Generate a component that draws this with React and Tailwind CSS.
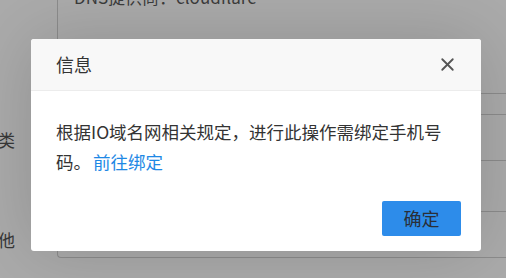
import { X } from 'lucide-react';

const font = { fontFamily: '"Noto Sans CJK SC", "Noto Sans", sans-serif' };

function Backdrop() {
  return (
    <div className="absolute inset-0 bg-[#ababab] flex">
      <div className="w-[57px] shrink-0 flex flex-col items-end">
        <span className="mt-[128px] mr-[42px] whitespace-nowrap text-[17px] leading-[24px] text-[#383838]">分类</span>
        <span className="mt-[76px] mr-[42px] whitespace-nowrap text-[17px] leading-[24px] text-[#383838]">其他</span>
      </div>
      <div className="flex-1 h-[258px] border-l border-b border-[#8c8c8c] rounded-bl-[4px] flex flex-col">
        <div className="-mt-[13px] ml-[16px] text-[17px] leading-[20px] text-[#3c3c3c] whitespace-nowrap">DNS提供商：cloudflare</div>
        <div className="mt-[86px] border-t border-[#8c8c8c]" />
        <div className="mt-[20px] border-t border-[#8c8c8c]" />
        <div className="mt-[45px] border-t border-[#8c8c8c]" />
        <div className="mt-[50px] border-t border-[#8c8c8c]" />
      </div>
    </div>
  );
}

export default function App() {
  return (
    <div className="relative w-[506px] h-[278px] overflow-hidden" style={font}>
      <Backdrop />
      <div className="absolute inset-0">
        <div className="ml-[31px] mt-[39px] w-[450px] bg-white rounded-[3px] shadow-[0_0_70px_rgba(0,0,0,0.16)] overflow-hidden">
          <div className="h-[52px] bg-[#f8f8f8] border-b border-[#ececec] flex items-center justify-between pl-[25px] pr-[23px]">
            <span className="text-[18px] text-[#333]">信息</span>
            <X size={21} strokeWidth={2.1} className="text-[#555]" />
          </div>
          <div className="pt-[26px] pl-[25px] pr-[28px] text-[17.5px] leading-[30px] text-[#333]">
            根据IO域名网相关规定，进行此操作需绑定手机号码。<a className="text-[#1e88e5] ml-[2px]">前往绑定</a>
          </div>
          <div className="flex justify-end pt-[24px] pb-[15px] pr-[20px]">
            <button className="w-[79px] h-[35px] bg-[#2d8cea] rounded-[2px] text-[18px] text-[#2a2f38]">确定</button>
          </div>
        </div>
      </div>
    </div>
  );
}
